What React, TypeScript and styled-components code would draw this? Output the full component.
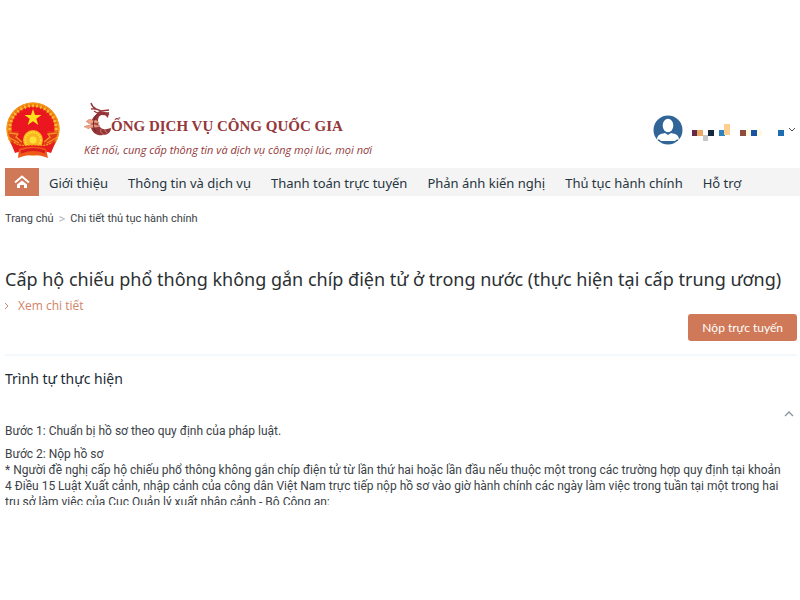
import React from "react";
import styled, { createGlobalStyle } from "styled-components";

const GlobalStyle = createGlobalStyle`
  *, *::before, *::after { box-sizing: border-box; }
  body {
    margin: 0;
    background: #fff;
    color: #3b4248;
    font-family: "Noto Sans", sans-serif;
  }
  h1, h2, p { margin: 0; font-weight: 400; }
  a { color: inherit; text-decoration: none; }
  button { font: inherit; border: 0; padding: 0; background: none; cursor: pointer; }
`;

const Page = styled.div`
  padding-top: 100px;
`;

const Header = styled.header`
  display: flex;
  align-items: center;
  height: 68px;
  padding: 0 4px 8px 5px;
`;

const Emblem = styled.svg`
  flex: none;
  width: 56px;
  height: 58px;
`;

const Brand = styled.a`
  display: flex;
  flex-direction: column;
  margin: 4px 0 0 23px;
  color: #94383a;
  white-space: nowrap;
`;

const BrandName = styled.span`
  display: flex;
  align-items: flex-end;
  height: 36px;
  font: 700 15px/24px "Liberation Serif", serif;
`;

const Dragon = styled.svg`
  flex: none;
  width: 28px;
  height: 36px;
  margin-right: -1px;
`;

const Slogan = styled.span`
  font-family: "Open Sans", sans-serif;
  font-size: 11px;
  line-height: 24px;
  font-style: italic;
`;

const Account = styled.button`
  display: flex;
  align-items: center;
  gap: 4px;
  margin-left: auto;
  color: #4a545c;
`;

const Avatar = styled.svg`
  width: 30px;
  height: 30px;
  margin-right: 5px;
`;

const MaskedName = styled.svg`
  width: 92px;
  height: 24px;
`;

const Caret = styled.svg`
  width: 8px;
  height: 8px;
  fill: none;
  stroke: currentColor;
`;

const Nav = styled.nav`
  display: flex;
  align-items: stretch;
  gap: 20px;
  height: 28px;
  margin-left: 5px;
  background: #f4f4f4;
  color: #263440;
  font-size: 13px;
  line-height: 30px;
  white-space: nowrap;
`;

const HomeLink = styled.a`
  display: flex;
  align-items: center;
  justify-content: center;
  width: 34px;
  margin-right: -10px;
  background: #cf7958;
  color: #fff;
`;

const Crumbs = styled.nav`
  display: flex;
  gap: 5px;
  padding: 13px 5px 0;
  font-family: Roboto, sans-serif;
  font-size: 11px;
  line-height: 20px;
`;

const Separator = styled.span`
  color: #b5b9bd;
  font-size: 13px;
`;

const Main = styled.main`
  padding: 36px 3px 0 5px;
`;

const Title = styled.h1`
  color: #2b3033;
  font-size: 18px;
  line-height: 28px;
`;

const DetailLink = styled.a`
  display: flex;
  align-items: center;
  gap: 5px;
  color: #d38468;
  font-family: "Open Sans", sans-serif;
  font-size: 12px;
  line-height: 26px;
`;

const Actions = styled.div`
  display: flex;
  justify-content: flex-end;
  margin-top: -5px;
  padding-bottom: 13px;
  border-bottom: 2px solid #f3f8fc;
`;

const SubmitButton = styled.button`
  padding: 0 14px;
  border-radius: 3px;
  background: #cf7958;
  color: #fff;
  font-family: Lato, sans-serif;
  font-size: 12px;
  line-height: 27px;
`;

const SectionTitle = styled.h2`
  padding-top: 12px;
  color: #202a34;
  font-size: 14px;
  line-height: 22px;
`;

const Toggle = styled.button`
  display: block;
  margin: 20px 3px 5px auto;
  color: #8c959d;
  line-height: 0;
`;

const Steps = styled.div`
  max-height: 82px;
  overflow: hidden;
  font-family: Roboto, sans-serif;
  font-size: 12px;
  line-height: 16px;
  white-space: nowrap;
`;

const Step = styled.p`
  margin-bottom: 7px;
`;

const navItems = [
  "Giới thiệu",
  "Thông tin và dịch vụ",
  "Thanh toán trực tuyến",
  "Phản ánh kiến nghị",
  "Thủ tục hành chính",
  "Hỗ trợ",
];

const maskTiles: [number, number, number, number, string][] = [
  [0, 6, 5, 6, "#67294a"],
  [5, 6, 6, 6, "#e8a963"],
  [11, 11, 5, 6, "#c5c7c9"],
  [16, 6, 6, 6, "#14283e"],
  [27, 6, 6, 6, "#2e83bd"],
  [32, 0, 6, 11, "#ffcf91"],
  [48, 6, 6, 6, "#8f4b3e"],
  [54, 6, 5, 6, "#fffbe0"],
  [59, 6, 6, 6, "#1854a3"],
  [65, 6, 5, 6, "#fffbe0"],
  [86, 6, 6, 6, "#1d6cb0"],
];

const rays = Array.from({ length: 27 }, (_, i) => -130 + i * 10);

const StateEmblem = () => (
  <Emblem viewBox="0 0 56 58" role="img" aria-label="Quốc huy">
    <circle cx="28" cy="28" r="26.5" fill="#ee7a16" />
    <circle cx="28" cy="28" r="26" fill="none" stroke="#f6a01c" strokeWidth="1" />
    <circle cx="28" cy="27" r="21.5" fill="#ea1620" />
    {rays.map((a) => (
      <path key={a} d="M28 2.5l1.2 2.2-1.2 2.3-1.2-2.3z" fill="#f9c02a" transform={`rotate(${a} 28 28)`} />
    ))}
    <path d="M28 8l2 6h6.5l-5.2 3.8 2 6.2L28 20.2l-5.3 3.8 2-6.2-5.2-3.8H26z" fill="#ffe11c" />
    <path d="M3 31l11-1-3 4 7 9-3 4-8-5z" fill="#e33a1b" />
    <path d="M53 31l-11-1 3 4-7 9 3 4 8-5z" fill="#e33a1b" />
    <path d="M4 32l9 1-2 3 6 5M5 37l9 5M52 32l-9 1 2 3-6 5M51 37l-9 5" fill="none" stroke="#f5981d" strokeWidth="1.3" />
    <circle cx="28" cy="39" r="10" fill="#f9b61f" />
    <circle cx="28" cy="39" r="7.7" fill="none" stroke="#ffe13a" strokeWidth="1.8" strokeDasharray="1.6 1" />
    <circle cx="28" cy="39" r="3.5" fill="#ffe13a" />
    <path d="M5 40c8 7 15 4 23 4s15 3 23-4l-5 12c-10-4-26-4-36 0z" fill="#e91c1d" />
    <path d="M9 41c6 5 12 3 19 3s13 2 19-3" fill="none" stroke="#f4a11c" strokeWidth="1.2" strokeDasharray="2 1" />
    <path d="M14 48l-1 9c9-4 21-4 30 0l-2-9c-8-3-19-3-27 0z" fill="#ee591b" />
    <path d="M16 51c8-3 17-3 24 0" fill="none" stroke="#db1b1d" strokeWidth="3" />
  </Emblem>
);

const DragonInitial = () => (
  <Dragon viewBox="0 0 28 36" role="img" aria-label="C">
    <path d="M13 12C7 16 6 22 7 26c2 6 7 8 12 7 5 0 8-3 8-7l-4 1c-5 1-9-2-9-8 0-5 3-7 7-6l3 3 1-6c-4 1-6-1-9-1-3 1-3 2-3 3z" fill="#963638" />
    <path d="M7 1c1 4 3 5 5 6M7 7c5-1 8 1 10 2l8-1M10 9c4 3 10 4 15 3" fill="none" stroke="#963638" strokeWidth="1.4" />
    <path d="M2 20c2-3 5-3 7-1 3-1 5 0 6 2-5-1-8 1-11 0M0 25c3-2 5-1 7-2 4-1 6 1 9 1-5 2-9 0-12 3" fill="#efa58b" stroke="#dc8d74" strokeWidth="1" />
    <path d="M17 27c-1 3 0 4 3 6M20 27l3 4" fill="none" stroke="#d99179" strokeWidth="0.8" />
    <path d="M13 12c-4 5-5 13-1 18" fill="none" stroke="#6e2429" strokeWidth="1" />
  </Dragon>
);

export default function App() {
  return (
    <>
      <GlobalStyle />
      <Page>
        <Header>
          <StateEmblem />
          <Brand href="#">
            <BrandName>
              <DragonInitial />
              ỔNG DỊCH VỤ CÔNG QUỐC GIA
            </BrandName>
            <Slogan>Kết nối, cung cấp thông tin và dịch vụ công mọi lúc, mọi nơi</Slogan>
          </Brand>
          <Account type="button" aria-label="Tài khoản">
            <Avatar viewBox="0 0 30 30">
              <circle cx="15" cy="15" r="14.5" fill="#316598" />
              <ellipse cx="15" cy="10.5" rx="5.3" ry="6.8" fill="#fff" />
              <path d="M4 25c0-5 3-6 8-7l3 2 3-2c5 1 8 2 8 7-2-1-3 0-4 1H8c-1-1-2-2-4-1z" fill="#fff" />
            </Avatar>
            <MaskedName viewBox="0 -6 92 24" shapeRendering="crispEdges">
              {maskTiles.map(([x, y, w, h, fill]) => (
                <rect key={x} x={x} y={y} width={w} height={h} fill={fill} />
              ))}
            </MaskedName>
            <Caret viewBox="0 0 8 8">
              <path d="M1 2l3 3 3-3" />
            </Caret>
          </Account>
        </Header>

        <Nav aria-label="Menu chính">
          <HomeLink href="#" aria-label="Trang chủ">
            <svg width="16" height="14" viewBox="0 0 16 14" fill="none" stroke="#fff" strokeWidth="2">
              <path d="M1 7.5l7-6 7 6" />
              <path d="M3 9.5l5-4 5 4V13h-3v-3H6v3H3z" fill="#fff" stroke="none" />
            </svg>
          </HomeLink>
          {navItems.map((item) => (
            <a href="#" key={item}>{item}</a>
          ))}
        </Nav>

        <Crumbs aria-label="Breadcrumb">
          <a href="#">Trang chủ</a>
          <Separator>&gt;</Separator>
          <a href="#">Chi tiết thủ tục hành chính</a>
        </Crumbs>

        <Main>
          <Title>Cấp hộ chiếu phổ thông không gắn chíp điện tử ở trong nước (thực hiện tại cấp trung ương)</Title>
          <DetailLink href="#">
            <Caret viewBox="0 0 8 8">
              <path d="M0 1l3 3-3 3" />
            </Caret>
            Xem chi tiết
          </DetailLink>
          <Actions>
            <SubmitButton type="button">Nộp trực tuyến</SubmitButton>
          </Actions>

          <SectionTitle>Trình tự thực hiện</SectionTitle>
          <Toggle type="button" aria-label="Thu gọn">
            <svg width="10" height="8" viewBox="0 0 10 8" fill="none" stroke="currentColor" strokeWidth="1.4">
              <path d="M1 6l4-4 4 4" />
            </svg>
          </Toggle>
          <Steps>
            <Step>Bước 1: Chuẩn bị hồ sơ theo quy định của pháp luật.</Step>
            <Step>
              Bước 2: Nộp hồ sơ
              <br />
              * Người đề nghị cấp hộ chiếu phổ thông không gắn chíp điện tử từ lần thứ hai hoặc lần đầu nếu thuộc một trong các trường hợp quy định tại khoản
              <br />
              4 Điều 15 Luật Xuất cảnh, nhập cảnh của công dân Việt Nam trực tiếp nộp hồ sơ vào giờ hành chính các ngày làm việc trong tuần tại một trong hai
              <br />
              trụ sở làm việc của Cục Quản lý xuất nhập cảnh - Bộ Công an:
            </Step>
          </Steps>
        </Main>
      </Page>
    </>
  );
}
